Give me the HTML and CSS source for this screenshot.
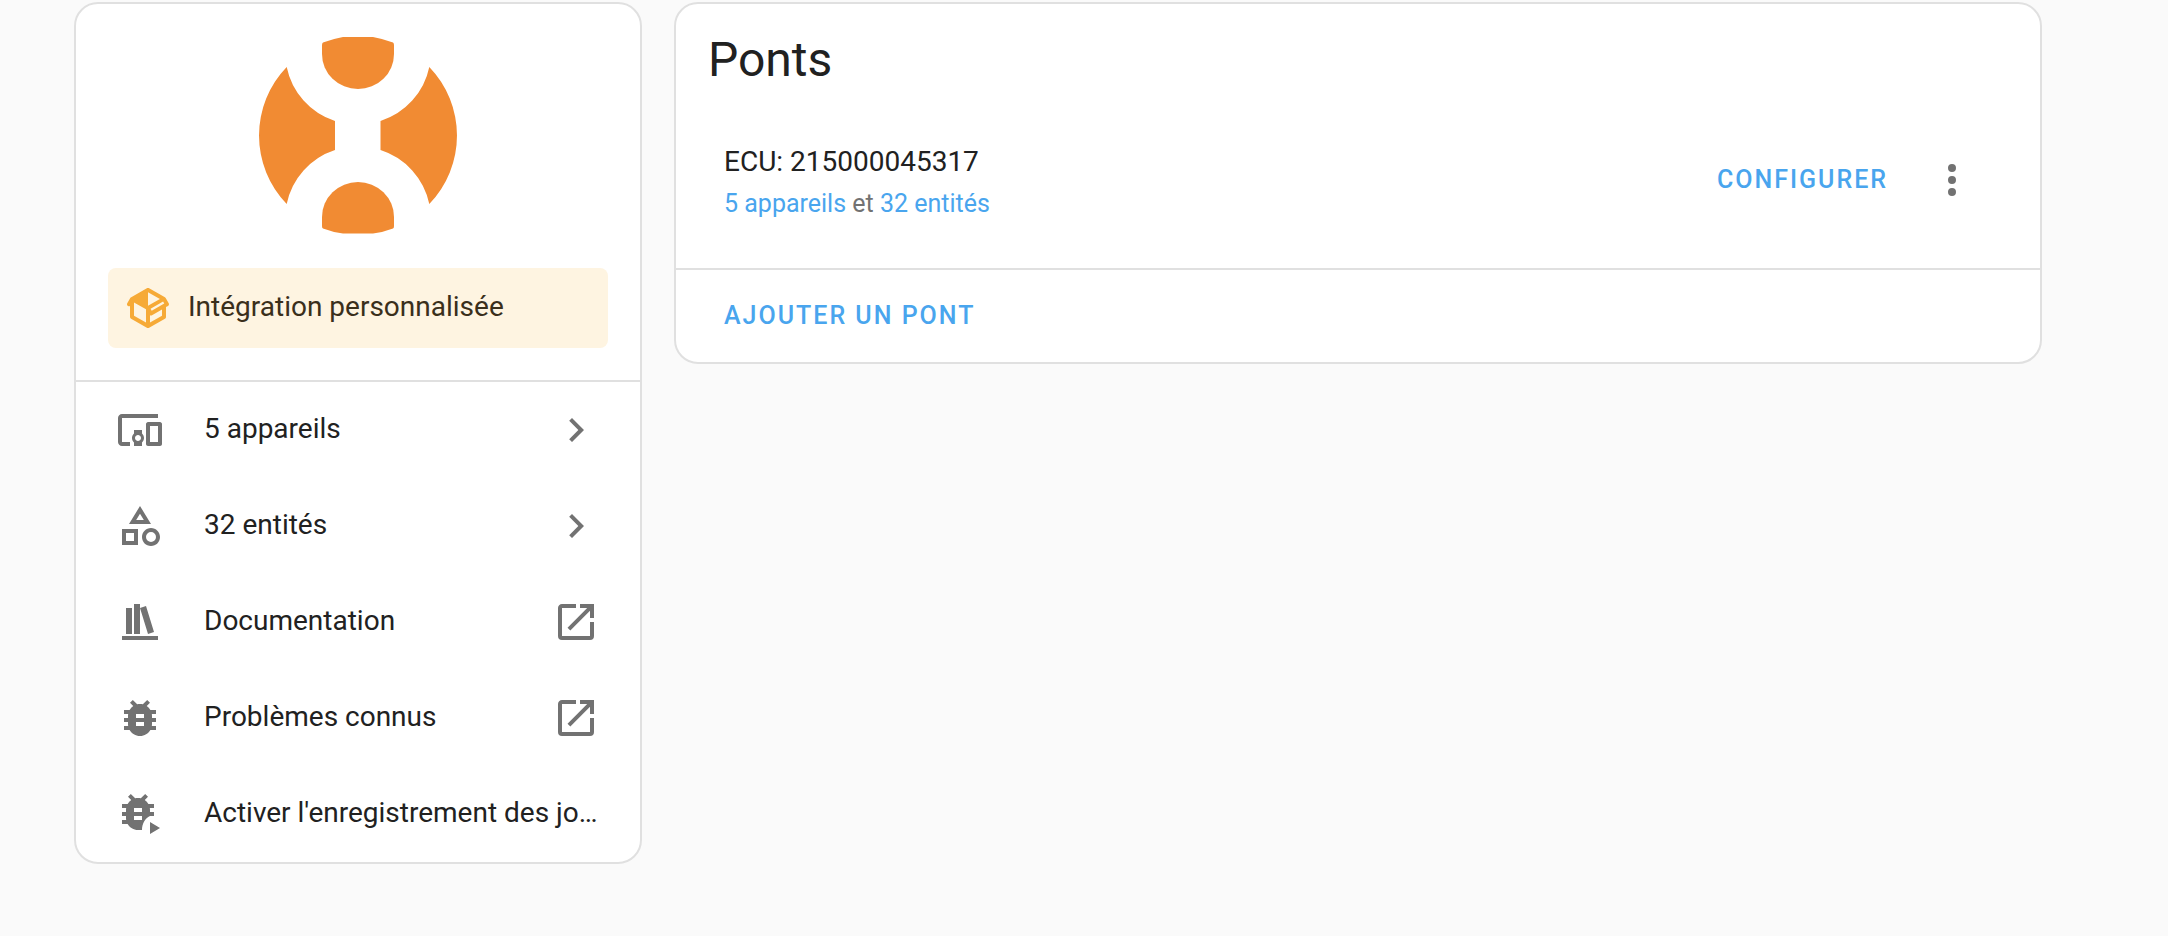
FILE: index.html
```
<!DOCTYPE html>
<html lang="fr">
<head>
	<meta charset="UTF-8">
	<meta name="viewport" content="width=device-width, initial-scale=1">
	<title>Intégration</title>
	<link rel="stylesheet" href="styles.css">
</head>
<body>
	<main class="content">
		<section class="card">
			<div class="overview">
				<svg class="logo" viewBox="0 0 200 200" role="img" aria-label="Logo">
					<path d="M85,1H115Q126,3 135,6.500Q136,7 136,9V18A36,35 0 0,1 64,18V9Q64,7 65,6.500Q74,3 85,1Z"/>
					<path d="M85,197.500H115Q126,196 135,192.500Q136,192 136,190V181A36,35 0 0,0 64,181V190Q64,192 65,192.500Q74,196 85,197.500Z"/>
					<path d="M28.700,31A72,72 0 0,0 77,85V114A72,72 0 0,0 28.700,168A98.600,98.600 0 0,1 28.700,31Z"/>
					<path d="M171.300,31A72,72 0 0,1 122.500,85V114A72,72 0 0,1 171.300,168A98.600,98.600 0 0,0 171.300,31Z"/>
				</svg>
				<div class="alert">
					<svg class="icon" viewBox="0 0 24 24"><path d="M2,10.96C1.5,10.68 1.35,10.07 1.63,9.59L3.13,7C3.24,6.8 3.41,6.66 3.6,6.58L11.43,2.18C11.59,2.06 11.79,2 12,2C12.21,2 12.41,2.06 12.57,2.18L20.47,6.62C20.66,6.72 20.82,6.88 20.91,7.08L22.36,9.6C22.64,10.08 22.47,10.69 22,10.96L21,11.54V16.5C21,16.88 20.79,17.21 20.47,17.38L12.57,21.82C12.41,21.94 12.21,22 12,22C11.79,22 11.59,21.94 11.43,21.82L3.53,17.38C3.21,17.21 3,16.88 3,16.5V10.96C2.7,11.13 2.32,11.14 2,10.96M12,4.15V4.15L12,10.85V10.85L17.96,7.5L12,4.15M5,15.91L11,19.29V12.58L5,9.21V15.91M19,15.91V12.69L14,15.59C13.67,15.77 13.3,15.76 13,15.6V19.29L19,15.91M13.85,13.36L20.13,9.73L19.55,8.72L13.27,12.35L13.85,13.36Z"/></svg>
					<span class="label">Intégration personnalisée</span>
				</div>
			</div>
			<nav class="menu">
				<a class="item" href="#">
					<svg class="icon" viewBox="0 0 24 24"><path d="M3 6H21V4H3C1.9 4 1 4.9 1 6V18C1 19.1 1.9 20 3 20H7V18H3V6M13 12H9V13.78C8.39 14.33 8 15.11 8 16C8 16.89 8.39 17.67 9 18.22V20H13V18.22C13.61 17.67 14 16.88 14 16S13.61 14.33 13 13.78V12M11 17.5C10.17 17.5 9.5 16.83 9.5 16S10.17 14.5 11 14.5 12.5 15.17 12.5 16 11.83 17.5 11 17.5M22 8H16C15.5 8 15 8.5 15 9V19C15 19.5 15.5 20 16 20H22C22.5 20 23 19.5 23 19V9C23 8.5 22.5 8 22 8M21 18H17V10H21V18Z"/></svg>
					<span class="label">5 appareils</span>
					<svg class="icon" viewBox="0 0 24 24"><path d="M8.59,16.58L13.17,12L8.59,7.41L10,6L16,12L10,18L8.59,16.58Z"/></svg>
				</a>
				<a class="item" href="#">
					<svg class="icon" viewBox="0 0 24 24"><path d="M11,13.5V21.5H3V13.5H11M9,15.5H5V19.5H9V15.5M12,2L17.5,11H6.5L12,2M12,5.86L10.08,9H13.92L12,5.86M17.5,13C20,13 22,15 22,17.5C22,20 20,22 17.5,22C15,22 13,20 13,17.5C13,15 15,13 17.5,13M17.5,15A2.5,2.5 0 0,0 15,17.5A2.5,2.5 0 0,0 17.5,20A2.5,2.5 0 0,0 20,17.5A2.5,2.5 0 0,0 17.5,15Z"/></svg>
					<span class="label">32 entités</span>
					<svg class="icon" viewBox="0 0 24 24"><path d="M8.59,16.58L13.17,12L8.59,7.41L10,6L16,12L10,18L8.59,16.58Z"/></svg>
				</a>
				<a class="item" href="#">
					<svg class="icon" viewBox="0 0 24 24"><path d="M9 3V18H12V3H9M12 5L16 18L19 17L15 4L12 5M5 5V18H8V5H5M3 19V21H21V19H3Z"/></svg>
					<span class="label">Documentation</span>
					<svg class="icon" viewBox="0 0 24 24"><path d="M14,3V5H17.59L7.76,14.83L9.17,16.24L19,6.41V10H21V3M19,19H5V5H12V3H5C3.89,3 3,3.9 3,5V19A2,2 0 0,0 5,21H19A2,2 0 0,0 21,19V12H19V19Z"/></svg>
				</a>
				<a class="item" href="#">
					<svg class="icon" viewBox="0 0 24 24"><path d="M14,12H10V10H14M14,16H10V14H14M20,8H17.19C16.74,7.22 16.12,6.55 15.37,6.04L17,4.41L15.59,3L13.42,5.17C12.96,5.06 12.5,5 12,5C11.5,5 11.04,5.06 10.59,5.17L8.41,3L7,4.41L8.62,6.04C7.88,6.55 7.26,7.22 6.81,8H4V10H6.09C6.04,10.33 6,10.66 6,11V12H4V14H6V15C6,15.34 6.04,15.67 6.09,16H4V18H6.81C7.85,19.79 9.78,21 12,21C14.22,21 16.15,19.79 17.19,18H20V16H17.91C17.96,15.67 18,15.34 18,15V14H20V12H18V11C18,10.66 17.96,10.33 17.91,10H20V8Z"/></svg>
					<span class="label">Problèmes connus</span>
					<svg class="icon" viewBox="0 0 24 24"><path d="M14,3V5H17.59L7.76,14.83L9.17,16.24L19,6.41V10H21V3M19,19H5V5H12V3H5C3.89,3 3,3.9 3,5V19A2,2 0 0,0 5,21H19A2,2 0 0,0 21,19V12H19V19Z"/></svg>
				</a>
				<button class="item" type="button">
					<svg class="icon" viewBox="0 0 24 24"><path d="M13,11H9V9H13M13,13V15H9V13M19,7H16.19C15.74,6.22 15.12,5.55 14.37,5.04L16,3.41L14.59,2L12.42,4.17C11.96,4.06 11.5,4 11,4C10.5,4 10.04,4.06 9.59,4.17L7.41,2L6,3.41L7.62,5.04C6.88,5.55 6.26,6.22 5.81,7H3V9H5.09C5.04,9.33 5,9.66 5,10V11H3V13H5V14C5,14.34 5.04,14.67 5.09,15H3V17H5.81C6.85,18.79 8.78,20 11,20H13C13,17 14.500,14 17,13H19V11H17V10C17,9.66 16.96,9.33 16.91,9H19V7M17,16V22L22,19L17,16Z"/></svg>
					<span class="label">Activer l'enregistrement des jo…</span>
				</button>
			</nav>
		</section>
		<section class="card">
			<h1 class="title">Ponts</h1>
			<div class="entry">
				<div class="info">
					<p class="name">ECU: 215000045317</p>
					<p class="details"><a href="#">5 appareils</a> et <a href="#">32 entités</a></p>
				</div>
				<button class="btn" type="button">Configurer</button>
				<button class="more" type="button" aria-label="Menu">
					<svg class="icon" viewBox="0 0 24 24"><path d="M12,16A2,2 0 0,1 14,18A2,2 0 0,1 12,20A2,2 0 0,1 10,18A2,2 0 0,1 12,16M12,10A2,2 0 0,1 14,12A2,2 0 0,1 12,14A2,2 0 0,1 10,12A2,2 0 0,1 12,10M12,4A2,2 0 0,1 14,6A2,2 0 0,1 12,8A2,2 0 0,1 10,6A2,2 0 0,1 12,4Z"/></svg>
				</button>
			</div>
			<div class="actions">
				<button class="btn" type="button">Ajouter un pont</button>
			</div>
		</section>
	</main>
</body>
</html>
```
FILE: styles.css
```
*{margin: 0;padding: 0;box-sizing: border-box;}
body{background: #fafafa;color: #212121;font-family: Roboto, "Liberation Sans", sans-serif;font-size: 28px;line-height: 40px;}
a{color: #49a5ee;text-decoration: none;}
button{border: 0;background: none;font: inherit;color: inherit;cursor: pointer;}

.content{display: grid;grid-template-columns: 568px minmax(0, 1fr);align-items: start;gap: 32px;padding: 2px 126px 32px 74px;}
.card{background: #fff;border: 2px solid #e0e0e0;border-radius: 24px;overflow: hidden;}
.icon{display: block;flex: none;width: 48px;height: 48px;fill: #727272;}

.overview{padding: 32px;border-bottom: 2px solid #e0e0e0;}
.logo{display: block;width: 200px;height: 200px;margin: 0 auto 32px;fill: #f18b33;}
.alert{display: flex;align-items: center;gap: 16px;height: 80px;padding: 0 16px;border-radius: 8px;background: #fef4e1;color: #3a2f1b;}
.alert .icon{fill: #f6aa37;}
.label{flex: 1;min-width: 0;padding-bottom: 2px;overflow: hidden;white-space: nowrap;text-overflow: ellipsis;}

.item{display: flex;align-items: center;width: 100%;height: 96px;padding: 0 40px;color: #212121;text-align: left;}
.item .label{margin-left: 40px;}

.title{padding: 24px 32px 0;font-size: 48px;line-height: 64px;font-weight: 400;}
.entry{display: flex;align-items: center;padding: 40px 40px 40px 48px;}
.info{flex: 1;padding-top: 6px;}
.details{margin-top: 2px;font-size: 25px;color: #727272;}
.btn{height: 72px;padding: 0 16px;color: #49a5ee;font-size: 25px;font-weight: 500;letter-spacing: 2px;text-transform: uppercase;}
.more{padding: 24px;}
.actions{display: flex;padding: 10px 32px;border-top: 2px solid #e0e0e0;}
```
